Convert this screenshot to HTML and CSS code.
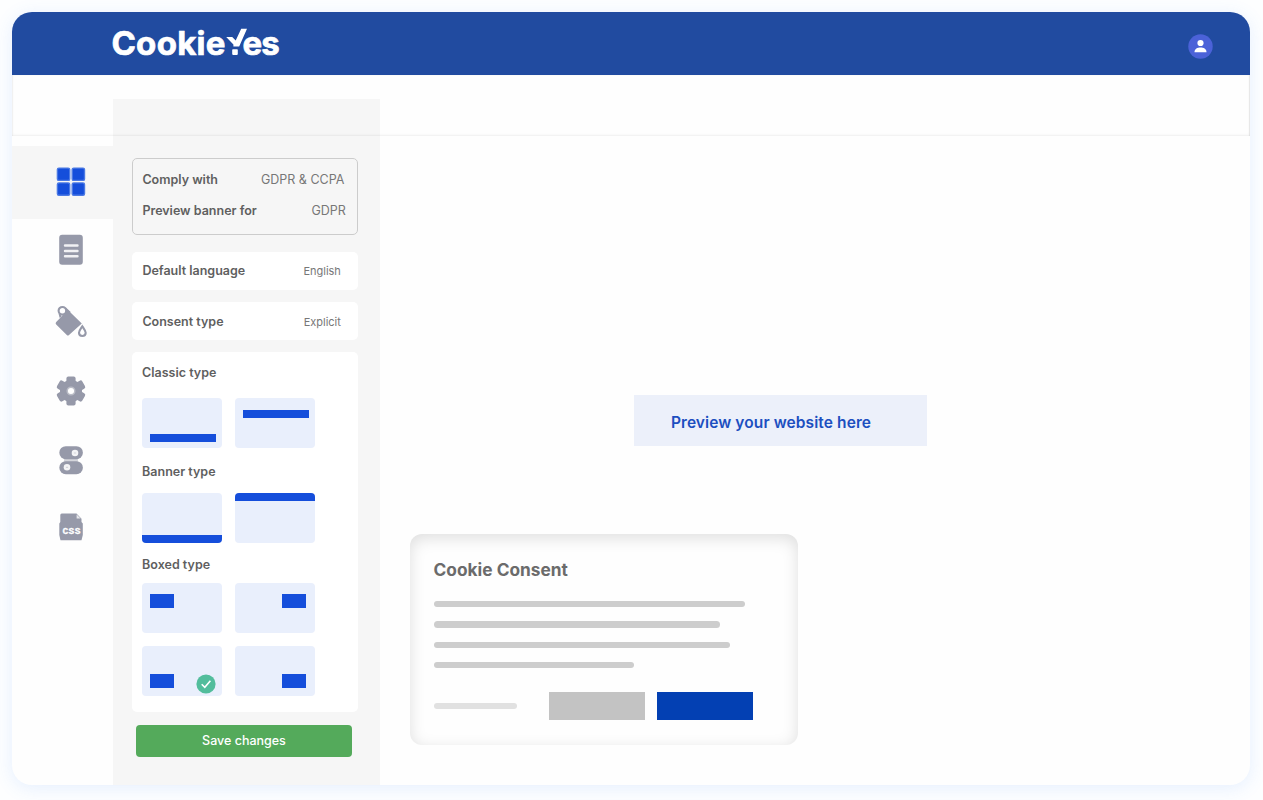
FILE: index.html
```html
<!DOCTYPE html>
<html lang="en">
<head>
    <meta charset="UTF-8">
    <meta name="viewport" content="width=device-width, initial-scale=1.0">
    <title>CookieYes</title>
    <link rel="stylesheet" href="styles.css">
</head>
<body>
    <div class="window">
        <header class="topbar">
            <div class="logo">
                <span class="logo-cookie">Cookie</span>
                <svg class="logo-check" width="20" height="28" viewBox="0 0 20 28">
                    <path d="M-0.8 9H5.2L8.7 12.6L14.2 0.8H20L12.2 18.4H6.4V16.6Z" fill="#fff"/>
                    <rect x="5.2" y="21.3" width="5.6" height="5.6" rx="0.8" fill="#fff"/>
                </svg>
                <span class="logo-es">es</span>
            </div>
            <svg class="avatar" width="25" height="25" viewBox="0 0 25 25">
                <circle cx="12.5" cy="12.5" r="12.2" fill="#4b62d8"/>
                <circle cx="12.5" cy="9" r="3.1" fill="#fff"/>
                <path d="M6.5 18.2C6.5 14.8 9.5 13.4 12.5 13.4S18.5 14.8 18.5 18.2Z" fill="#fff"/>
            </svg>
        </header>
        <div class="subbar"></div>

        <div class="main">
            <nav class="sidebar">
                <a class="nav-item active">
                    <svg width="32" height="32" viewBox="0 0 32 32">
                        <g fill="#154edb" stroke="#4b79e4" stroke-width="1.4">
                            <rect x="2.4" y="2.1" width="12.3" height="12.3" rx="1.5"/>
                            <rect x="17.2" y="2.1" width="12.3" height="12.3" rx="1.5"/>
                            <rect x="2.4" y="16.9" width="12.3" height="12.3" rx="1.5"/>
                            <rect x="17.2" y="16.9" width="12.3" height="12.3" rx="1.5"/>
                        </g>
                    </svg>
                </a>
                <a class="nav-item nav-content">
                    <svg width="32" height="32" viewBox="0 0 32 32">
                        <rect x="4.2" y="0.8" width="23.6" height="30" rx="3" fill="#9699a9"/>
                        <path d="M10 11.5H22.5M10 17H22.5M10 22.3H22.5" stroke="#f1f1f4" stroke-width="2.4" stroke-linecap="round"/>
                    </svg>
                </a>
                <a class="nav-item nav-colors">
                    <svg width="32" height="32" viewBox="0 0 32 32">
                        <path d="M12.4 4.4L26.8 18.4L14 30Q12.9 31 11.8 30L1.2 19.4Q0 18.2 1.2 17L7.6 10.4Z" fill="#9699a9"/>
                        <circle cx="7.4" cy="5.8" r="3.8" fill="#fff" stroke="#9699a9" stroke-width="2.1"/>
                        <path d="M10.5 3.4L15 7.8M4.6 8.5L5.6 12.6" stroke="#9699a9" stroke-width="2.1"/>
                        <path d="M27.3 21.3C25.8 23.6 24 25.7 24 27.8C24 29.8 25.4 31 27.3 31S30.7 29.8 30.7 27.8C30.7 25.7 28.8 23.6 27.3 21.3Z" fill="#fff" stroke="#9699a9" stroke-width="2.1"/>
                    </svg>
                </a>
                <a class="nav-item nav-settings">
                    <svg width="32" height="32" viewBox="0 0 32 32">
                        <g fill="#9699a9">
                            <circle cx="16" cy="16" r="11"/>
                            <rect x="11.4" y="1.4" width="9.2" height="29.2" rx="2"/>
                            <rect x="11.4" y="1.4" width="9.2" height="29.2" rx="2" transform="rotate(60 16 16)"/>
                            <rect x="11.4" y="1.4" width="9.2" height="29.2" rx="2" transform="rotate(120 16 16)"/>
                        </g>
                        <circle cx="16" cy="16" r="3.8" fill="#fff" stroke="#babcc6" stroke-width="1.5"/>
                    </svg>
                </a>
                <a class="nav-item nav-toggles">
                    <svg width="32" height="32" viewBox="0 0 32 32">
                        <rect x="9" y="14" width="14" height="4" fill="#d5d6dc"/>
                        <rect x="4.3" y="2.2" width="23.6" height="13" rx="6.5" fill="#9699a9"/>
                        <rect x="4.3" y="17.2" width="23.6" height="13" rx="6.5" fill="#9699a9"/>
                        <circle cx="20" cy="9" r="3.3" fill="#f4f4f6"/>
                        <circle cx="12" cy="23.3" r="3.3" fill="#f4f4f6"/>
                        <path d="M18.9 9H21.1M10.9 23.3H13.1" stroke="#d3d4da" stroke-width="1.2"/>
                    </svg>
                </a>
                <a class="nav-item nav-css">
                    <svg width="32" height="32" viewBox="0 0 32 32">
                        <path d="M6.8 2.5H21.5L26.5 7.8V11L27.8 12.5V24L26.5 29.2H5.5L4.3 24V12.5L5.3 11V4Q5.3 2.5 6.8 2.5Z" fill="#9699a9"/>
                        <path d="M21.6 3.6V7.6H25.6Z" fill="#e6e7eb"/>
                        <text x="7.4" y="22.9" class="css-label" textLength="18">CSS</text>
                    </svg>
                </a>
            </nav>

            <section class="panel">
                <div class="law-box">
                    <div class="law-row"><b>Comply with</b><span>GDPR &amp; CCPA</span></div>
                    <div class="law-row law-preview"><b>Preview banner for</b><span>GDPR</span></div>
                </div>
                <div class="option"><b>Default language</b><span>English</span></div>
                <div class="option"><b>Consent type</b><span>Explicit</span></div>

                <div class="types">
                    <h3>Classic type</h3>
                    <div class="thumbs classic">
                        <div class="thumb thumb-bottom"><i class="bar"></i></div>
                        <div class="thumb"><i class="bar"></i></div>
                    </div>
                    <h3>Banner type</h3>
                    <div class="thumbs banner">
                        <div class="thumb thumb-bottom"><i class="bar"></i></div>
                        <div class="thumb"><i class="bar"></i></div>
                    </div>
                    <h3>Boxed type</h3>
                    <div class="thumbs boxed">
                        <div class="thumb"><i class="bar"></i></div>
                        <div class="thumb thumb-right"><i class="bar"></i></div>
                        <div class="thumb thumb-bottom">
                            <i class="bar"></i>
                            <svg class="selected" width="20" height="20" viewBox="0 0 20 20">
                                <circle cx="10" cy="10" r="9.6" fill="#52bd9c"/>
                                <path d="M5.7 10.2L8.8 13.3L14.4 6.8" fill="none" stroke="#fff" stroke-width="1.6"/>
                            </svg>
                        </div>
                        <div class="thumb thumb-bottom thumb-right"><i class="bar"></i></div>
                    </div>
                </div>
                <button class="save">Save changes</button>
            </section>

            <section class="canvas">
                <div class="preview">Preview your website here</div>
                <div class="consent">
                    <h2>Cookie Consent</h2>
                    <div class="line line-1"></div>
                    <div class="line line-2"></div>
                    <div class="line line-3"></div>
                    <div class="line line-4"></div>
                    <div class="actions">
                        <div class="line link"></div>
                        <div class="btn reject"></div>
                        <div class="btn accept"></div>
                    </div>
                </div>
            </section>
        </div>
    </div>
</body>
</html>
```
FILE: styles.css
```css
* {
    box-sizing: border-box;
}
body {
    margin: 0;
    padding: 12.4px 12.4px 0;
    height: 800px;
    overflow: hidden;
    background: #fdfeff;
    font-family: Inter, "Liberation Sans", sans-serif;
    color: #5f5f5f;
}
.window {
    width: 1238px;
    height: 773px;
    display: flex;
    flex-direction: column;
    background: #fefefe;
    border-radius: 20px;
    overflow: hidden;
    box-shadow: 0 3px 18px rgba(70, 140, 250, 0.13);
}
.topbar {
    height: 62.5px;
    flex: none;
    display: flex;
    justify-content: space-between;
    padding: 0 37.5px 0 99px;
    background: #214ba0;
}
.logo {
    display: flex;
    color: #fff;
    font-weight: 700;
    font-size: 33px;
    line-height: 40px;
    padding-top: 11px;
}
.logo-cookie {
    width: 115px;
    letter-spacing: 0.3px;
    -webkit-text-stroke: 0.7px #fff;
}
.logo-check {
    margin: 5px 0 0 0.5px;
    overflow: visible;
    z-index: 1;
}
.logo-es {
    margin-left: -4.5px;
    letter-spacing: -0.8px;
    -webkit-text-stroke: 0.7px #fff;
}
.avatar {
    margin-top: 21.5px;
}
.subbar {
    height: 61px;
    flex: none;
    position: relative;
    z-index: 1;
    box-shadow: inset 0 -1px 3px rgba(0, 0, 0, 0.05), inset -1px 0 1px rgba(0, 0, 0, 0.08), inset 1px 0 1px rgba(0, 0, 0, 0.04);
}
.main {
    flex: 1;
    display: grid;
    grid-template-columns: 100.2px 267.3px 1fr;
}

/* left icons */
.sidebar {
    padding-top: 10px;
}
.nav-item {
    display: flex;
    height: 32px;
    padding-left: 42.5px;
}
.nav-item svg {
    overflow: visible;
}
.nav-item.active {
    height: 73px;
    padding-top: 20px;
    background: #f6f6f6;
}
.nav-content {
    margin-top: 15px;
}
.nav-colors {
    margin-top: 39px;
}
.nav-settings {
    margin-top: 38.6px;
}
.nav-toggles {
    margin-top: 36.5px;
}
.nav-css {
    margin-top: 35px;
}
.css-label {
    font: 700 9.5px "Liberation Mono", monospace;
    fill: #fff;
    stroke: #fff;
    stroke-width: 0.3px;
}

/* options panel */
.panel {
    margin-top: -37.2px;
    padding: 59.4px 21.5px 0 19px;
    background: #f6f6f6;
}
.law-box {
    height: 77px;
    padding: 10.6px 13px 0 9.8px;
    border: 1px solid #ccc;
    border-radius: 5px;
    margin-bottom: 16.8px;
}
.law-row,
.option {
    display: flex;
    justify-content: space-between;
    align-items: center;
    font-size: 12.5px;
    line-height: 20px;
}
.law-preview {
    margin: 11px -1.5px 0 0;
}
.panel b,
.types h3 {
    font-weight: 600;
}
.law-row span {
    font-weight: 400;
    color: #777;
}
.option {
    height: 38px;
    padding: 1px 17.5px 0 10.8px;
    margin-bottom: 12.3px;
    background: #fff;
    border-radius: 5px;
}
.option span {
    font-size: 11px;
    color: #777;
}
.types {
    height: 360px;
    padding: 11px 10.5px 0;
    background: #fff;
    border-radius: 5px;
}
.types h3 {
    margin: 0;
    font-size: 12.5px;
    line-height: 20px;
}
.thumbs {
    display: grid;
    grid-template-columns: 80px 80px;
    gap: 13px 12.7px;
}
.thumb {
    height: 50px;
    display: flex;
    position: relative;
    background: #e9effc;
    border-radius: 4px;
    overflow: hidden;
}
.thumb-bottom {
    align-items: flex-end;
}
.thumb-right {
    justify-content: flex-end;
}
.bar {
    background: #154edb;
}
.classic {
    margin: 14.5px 0 14px;
}
.classic .bar {
    width: 66px;
    height: 8px;
    margin: 12.5px 0 6px 8px;
}
.banner {
    margin: 11px 0 12.5px;
}
.banner .bar {
    width: 80px;
    height: 8px;
}
.boxed {
    margin-top: 8px;
}
.boxed .bar {
    width: 24px;
    height: 14px;
    margin: 11px 9px 8px 8px;
}
.selected {
    position: absolute;
    right: 5.8px;
    bottom: 2.5px;
}
.save {
    display: block;
    width: 216px;
    height: 32px;
    margin: 12.3px 0 0 4.4px;
    border: 0;
    border-radius: 4px;
    background: #54aa5b;
    color: #fff;
    font: 500 12.5px Inter, sans-serif;
}

/* website preview */
.canvas {
    padding: 258.7px 0 0 30px;
}
.preview {
    width: 293px;
    height: 51.5px;
    margin-left: 224px;
    padding-left: 37px;
    background: #ecf0fa;
    color: #1c4fc0;
    font-size: 15.5px;
    font-weight: 600;
    letter-spacing: 0.1px;
    line-height: 55px;
    white-space: nowrap;
}
.consent {
    width: 388px;
    height: 211px;
    margin-top: 88px;
    padding: 24px 23.7px;
    border-radius: 12px;
    box-shadow: inset 0 4px 16px rgba(0, 0, 0, 0.13);
}
.consent h2 {
    margin: 0 0 19px;
    color: #6b6b6b;
    font-size: 17.3px;
    font-weight: 700;
    line-height: 24px;
}
.line {
    height: 6.3px;
    margin-bottom: 14px;
    border-radius: 4px;
    background: #cdcdcd;
}
.line-1 {
    width: 311px;
}
.line-2 {
    width: 286px;
}
.line-3 {
    width: 296px;
}
.line-4 {
    width: 200px;
}
.actions {
    display: flex;
    align-items: center;
    margin-top: 23.5px;
}
.link {
    width: 83px;
    margin: 0 32.3px 0 0;
    background: #e1e1e1;
}
.btn {
    width: 96px;
    height: 28.5px;
}
.reject {
    margin-right: 12px;
    background: #c3c3c3;
}
.accept {
    background: #0340b3;
}
```
